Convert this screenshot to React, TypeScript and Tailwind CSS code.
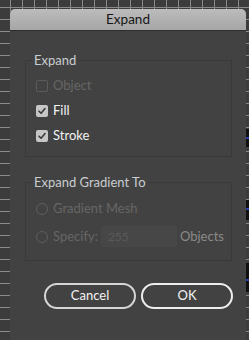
import React from "react";

function CheckBox({ checked, disabled }: { checked?: boolean; disabled?: boolean }) {
  if (checked) {
    return (
      <div className="w-[12px] h-[12px] rounded-[2px] bg-[#c6c6c6] flex items-center justify-center shrink-0">
        <svg width="10" height="10" viewBox="0 0 10 10">
          <path d="M2 5.2 L4.1 7.3 L8 2.6" fill="none" stroke="#3a3a3a" strokeWidth="1.6" strokeLinecap="round" strokeLinejoin="round" />
        </svg>
      </div>
    );
  }
  return (
    <div
      className={`w-[12px] h-[12px] rounded-[2px] border shrink-0 ${disabled ? "border-[#5c5c5c]" : "border-[#c6c6c6]"}`}
    />
  );
}

function Radio() {
  return <div className="w-[12px] h-[12px] rounded-full border border-[#5e5e5e] shrink-0" />;
}

export default function App() {
  return (
    <div
      className="relative w-[249px] h-[340px] overflow-hidden bg-[#3c3c3c] bg-[linear-gradient(to_right,#8a8a8a_1px,transparent_1px),linear-gradient(to_bottom,#8a8a8a_1px,transparent_1px)] bg-[size:12px_12px] bg-[position:10px_7px] pt-[9px] pl-[10px]"
      style={{ fontFamily: "Lato, 'Noto Sans', sans-serif" }}
    >
      <div className="w-[236px] h-[340px] bg-[#424242] rounded-t-[5px] overflow-hidden">
        <div className="h-[22px] bg-[linear-gradient(to_bottom,#bcbcbc,#a6a6a6)] border-b border-[#2e2e2e] flex items-center justify-center text-[13.5px] text-[#161616]">
          Expand
        </div>

        <fieldset className="ml-[15px] mr-[14px] mt-[21px] border border-[#393939] pl-[10px] pt-[5px] pb-[8px]">
          <legend className="-ml-[4px] px-[2px] h-[16px] leading-[16px] text-[13px] text-[#c9cdd0]">Expand</legend>
          <div className="h-[25px] flex items-center gap-[5px]">
            <CheckBox disabled />
            <span className="text-[13px] text-[#666666]">Object</span>
          </div>
          <div className="h-[25px] flex items-center gap-[5px]">
            <CheckBox checked />
            <span className="text-[13px] text-[#f2f2f2]">Fill</span>
          </div>
          <div className="h-[25px] flex items-center gap-[5px]">
            <CheckBox checked />
            <span className="text-[13px] text-[#f2f2f2]">Stroke</span>
          </div>
        </fieldset>

        <fieldset className="ml-[15px] mr-[14px] mt-[17px] border border-[#393939] pl-[10px] pt-[6px] pb-[13px]">
          <legend className="-ml-[4px] px-[2px] h-[16px] leading-[16px] text-[13px] text-[#c9cdd0]">Expand Gradient To</legend>
          <div className="h-[26px] flex items-center gap-[5px]">
            <Radio />
            <span className="text-[13px] text-[#666666]">Gradient Mesh</span>
          </div>
          <div className="mt-[4px] h-[21px] flex items-center">
            <Radio />
            <span className="ml-[5px] text-[13px] text-[#666666]">Specify:</span>
            <div className="ml-[3px] w-[76px] h-[21px] bg-[#474747] rounded-[2px] flex items-center pl-[7px] text-[12px] text-[#5a5a5a]">
              255
            </div>
            <span className="ml-[3px] text-[13px] text-[#8a8a8a]">Objects</span>
          </div>
        </fieldset>

        <div className="mt-[22px] ml-[34px] flex gap-[5px]">
          <button className="w-[92px] h-[26px] rounded-full border-2 border-[#d6d6d6] text-[13px] text-[#f2f2f2] flex items-center justify-center">
            Cancel
          </button>
          <button className="w-[92px] h-[26px] rounded-full border-2 border-[#eeeeee] text-[13px] text-[#f2f2f2] flex items-center justify-center">
            OK
          </button>
        </div>
      </div>

      <div className="absolute right-0 top-[129px] w-[3px] h-[18px] bg-[#111111]">
        <div className="mt-[8px] h-[2px] bg-[#2b3fb0]" />
      </div>
      <div className="absolute right-0 top-[200px] w-[3px] h-[20px] bg-[#111111]">
        <div className="mt-[8px] h-[2px] bg-[#2b3fb0]" />
      </div>
      <div className="absolute right-0 top-[263px] w-[3px] h-[29px] bg-[#111111]">
        <div className="mt-[16px] h-[2px] bg-[#2b3fb0]" />
      </div>
    </div>
  );
}
